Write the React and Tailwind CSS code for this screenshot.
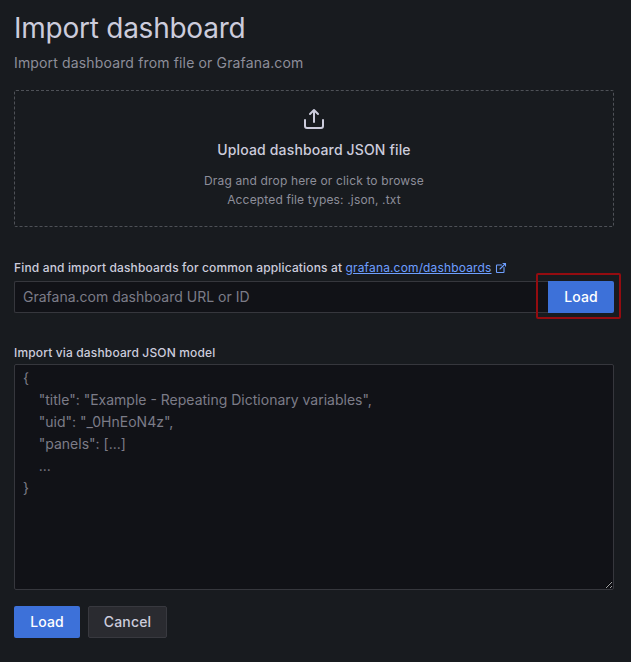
const PLACEHOLDER = `{
    "title": "Example - Repeating Dictionary variables",
    "uid": "_0HnEoN4z",
    "panels": [...]
    ...
}`;

function UploadIcon() {
  return (
    <svg
      className="h-6 w-6"
      viewBox="0 0 24 24"
      fill="none"
      stroke="#ccccdc"
      strokeWidth="2"
      strokeLinecap="round"
      strokeLinejoin="round"
    >
      <path d="M12 15V3M8 7l4-4 4 4" />
      <path d="M3 13v6a2 2 0 0 0 2 2h14a2 2 0 0 0 2-2v-6" />
    </svg>
  );
}

function ExternalLinkIcon() {
  return (
    <svg
      className="h-3 w-3"
      viewBox="0 0 24 24"
      fill="none"
      stroke="#6e9fff"
      strokeWidth="2.2"
      strokeLinecap="round"
      strokeLinejoin="round"
    >
      <path d="M18 11v9a1 1 0 0 1-1 1H4a1 1 0 0 1-1-1V7a1 1 0 0 1 1-1h9" />
      <path d="M10 14L21 3M16 3h5v5" />
    </svg>
  );
}

export default function App() {
  return (
    <main className="h-[662px] w-full overflow-hidden bg-[#181b1f] pl-3.5 pr-[17px] pt-3 font-['Inter',sans-serif] text-sm leading-[22px] tracking-[0.01071em] text-[#ccccdc]">
      <h1 className="text-[28px] leading-8 tracking-[-0.00893em]">Import dashboard</h1>
      <p className="mt-2 text-[#8d8e9a]">Import dashboard from file or Grafana.com</p>

      <section className="mt-4 flex h-[137px] flex-col items-center rounded-xs border border-dashed border-[#4e5157] pt-4">
        <UploadIcon />
        <div className="mt-2 font-medium">Upload dashboard JSON file</div>
        <div className="mt-2.5 text-center text-xs leading-[19px] tracking-[0.0125em] text-[#8d8e9a]">
          <p>Drag and drop here or click to browse</p>
          <p>Accepted file types: .json, .txt</p>
        </div>
      </section>

      <label className="mt-8 flex h-[18px] items-center text-xs font-medium tracking-[0.15px]">
        <span>Find and import dashboards for common applications at&nbsp;</span>
        <a className="flex items-center gap-[3px] font-normal text-[#6e9fff]">
          <span className="underline">grafana.com/dashboards</span>
          <ExternalLinkIcon />
        </a>
      </label>
      <div className="relative mt-1 flex h-8">
        <input
          className="min-w-0 flex-1 rounded-l-xs border border-r-0 border-[#36373d] bg-[#111217] px-2 tracking-normal outline-none placeholder:text-[#7c7c88]"
          placeholder="Grafana.com dashboard URL or ID"
        />
        <button className="w-[66px] rounded-r-xs bg-[#3d71d9] font-medium tracking-[0.01071em] text-white">
          Load
        </button>
        <div className="pointer-events-none absolute -right-[7px] -top-[8px] h-[46px] w-[85px] rounded-xs border-2 border-[#940c10]" />
      </div>

      <label className="mt-[31px] block text-xs leading-[18px] font-medium tracking-[0.15px]">
        Import via dashboard JSON model
      </label>
      <textarea
        className="mt-[2px] block h-[226px] w-full resize rounded-xs border border-[#36373d] bg-[#111217] px-2 py-[2px] leading-[22px] tracking-normal outline-none placeholder:text-[#7c7c88]"
        placeholder={PLACEHOLDER}
      />

      <div className="mt-4 flex h-8 gap-2">
        <button className="w-[66px] rounded-xs bg-[#3d71d9] font-medium tracking-[0.01071em] text-white">
          Load
        </button>
        <button className="w-[79px] rounded-xs border border-[#38393f] bg-[#2a2b30] font-medium tracking-[0.01071em]">
          Cancel
        </button>
      </div>
    </main>
  );
}
